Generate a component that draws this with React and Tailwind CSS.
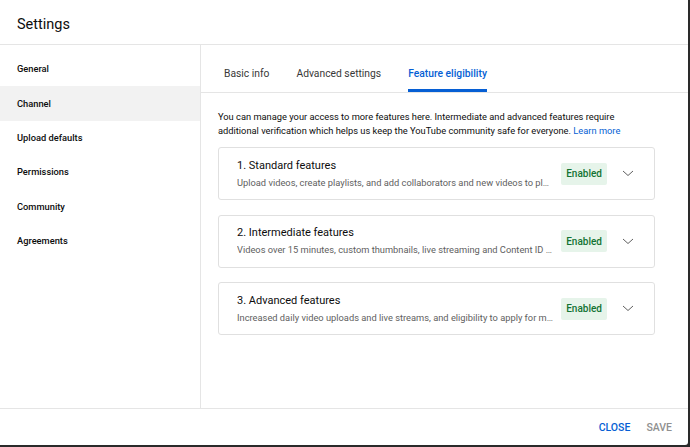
import { useState } from 'react';

const navItems = ['General', 'Channel', 'Upload defaults', 'Permissions', 'Community', 'Agreements'];
const tabs = ['Basic info', 'Advanced settings', 'Feature eligibility'];

const features = [
  {
    title: '1. Standard features',
    text: 'Upload videos, create playlists, and add collaborators and new videos to playlists you own',
  },
  {
    title: '2. Intermediate features',
    text: 'Videos over 15 minutes, custom thumbnails, live streaming and Content ID appeals',
  },
  {
    title: '3. Advanced features',
    text: 'Increased daily video uploads and live streams, and eligibility to apply for more features',
  },
];

const Chevron = () => (
  <svg width="12" height="7" viewBox="0 0 12 7" fill="none" stroke="#606060" strokeWidth="1">
    <polyline points="1,1 6,5.5 11,1" />
  </svg>
);

const App = () => {
  const [active, setActive] = useState('Channel');
  const [tab, setTab] = useState('Feature eligibility');

  return (
    <div className="w-[690px] h-[447px] bg-[#2a2a2a] font-['Roboto',sans-serif]">
      <div className="w-[688px] h-[445px] bg-white rounded-br-[3px] flex flex-col overflow-hidden">
        {/* Header */}
        <div className="h-[45px] shrink-0 border-b border-[#e5e5e5] flex items-center px-[17px] pt-[5px]">
          <h1 className="text-[14.5px] text-[#0d0d0d]">Settings</h1>
        </div>

        <div className="flex flex-1 min-h-0">
          {/* Sidebar */}
          <div className="w-[201px] shrink-0 border-r border-[#e5e5e5] pt-[7px]">
            {navItems.map((item) => (
              <div
                key={item}
                onClick={() => setActive(item)}
                className={`h-[34.4px] flex items-center px-[17px] text-[9.3px] font-medium text-[#0d0d0d] cursor-pointer ${
                  active === item ? 'bg-[#f2f2f2]' : ''
                }`}
              >
                {item}
              </div>
            ))}
          </div>

          {/* Main */}
          <div className="flex-1 min-w-0 flex flex-col">
            <div className="h-[48px] shrink-0 border-b border-[#e5e5e5] flex gap-[27px] px-[23px]">
              {tabs.map((t) => (
                <div
                  key={t}
                  onClick={() => setTab(t)}
                  className={`h-[47px] flex items-center pt-[13px] border-b-[3px] text-[10.3px] cursor-pointer ${
                    tab === t ? 'border-[#065fd4] text-[#065fd4] font-medium' : 'border-transparent text-[#383838]'
                  }`}
                >
                  {t}
                </div>
              ))}
            </div>

            <div className="px-[17px] pt-[17px]">
              <p className="w-[436px] text-[9.3px] leading-[14px] text-[#0d0d0d]">
                You can manage your access to more features here. Intermediate and advanced features require
                additional verification which helps us keep the YouTube community safe for everyone.{' '}
                <span className="text-[#065fd4]">Learn more</span>
              </p>

              <div className="mt-[9px] w-[437px] flex flex-col gap-[14.5px]">
                {features.map((f) => (
                  <div
                    key={f.title}
                    className="h-[53px] border border-[#e0e0e0] rounded-[3px] flex items-center pl-[18px] pr-[5px]"
                  >
                    <div className="flex-1 min-w-0 pr-[8px]">
                      <div className="text-[11px] leading-[16px] text-[#0d0d0d]">{f.title}</div>
                      <div className="mt-[2px] text-[9.3px] leading-[14px] text-[#606060] truncate">{f.text}</div>
                    </div>
                    <div className="h-[22px] px-[5px] flex items-center bg-[#e6f4ea] text-[#137333] text-[10px] font-medium rounded-[2px]">
                      Enabled
                    </div>
                    <div className="w-[42px] flex justify-center">
                      <Chevron />
                    </div>
                  </div>
                ))}
              </div>
            </div>
          </div>
        </div>

        {/* Footer */}
        <div className="h-[37px] shrink-0 border-t border-[#e5e5e5] flex items-center justify-end gap-[16px] pr-[16px] pt-[2px]">
          <button className="text-[10.5px] font-medium text-[#065fd4]">CLOSE</button>
          <button className="text-[10.5px] font-medium text-[#909090]">SAVE</button>
        </div>
      </div>
    </div>
  );
};

export default App;
